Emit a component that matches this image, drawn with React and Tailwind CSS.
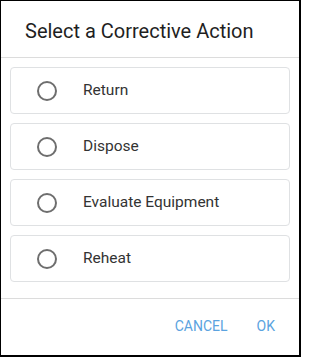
import { useState } from "react";

const actions = ["Return", "Dispose", "Evaluate Equipment", "Reheat"];

export default function App() {
  const [selected, setSelected] = useState(null);

  return (
    <div
      className="w-[301px] h-[357px] bg-white border-t border-l border-r-2 border-b-2 border-black flex flex-col"
      style={{ fontFamily: "Roboto, 'Liberation Sans', sans-serif" }}
    >
      {/* Title */}
      <div className="h-[57px] pl-[24px] flex items-center border-b border-[#dcdcdc] shrink-0">
        <h2 className="text-[20px] text-[#1f1f1f] leading-none pt-[3px]">Select a Corrective Action</h2>
      </div>

      {/* Options */}
      <div className="flex flex-col gap-[9px] px-[9px] pt-[9px] h-[241px] shrink-0 border-b border-[#dcdcdc]">
        {actions.map((label) => (
          <button
            key={label}
            onClick={() => setSelected(label)}
            className="h-[47px] w-full flex items-center rounded-[4px] border border-[#dfe1e3] bg-white text-left"
          >
            <span className="ml-[26px] w-[20px] h-[20px] rounded-full border-2 border-[#6e6e6e] flex items-center justify-center shrink-0">
              {selected === label && <span className="w-[10px] h-[10px] rounded-full bg-[#6e6e6e]" />}
            </span>
            <span className="ml-[26px] text-[15.5px] text-[#333333]">{label}</span>
          </button>
        ))}
      </div>

      {/* Actions */}
      <div className="flex-1 flex items-center justify-end gap-[29px] pr-[24px] pb-[2px]">
        <button className="text-[14px] text-[#5ba3e0] uppercase leading-none">Cancel</button>
        <button className="text-[14px] text-[#5ba3e0] uppercase leading-none">OK</button>
      </div>
    </div>
  );
}
